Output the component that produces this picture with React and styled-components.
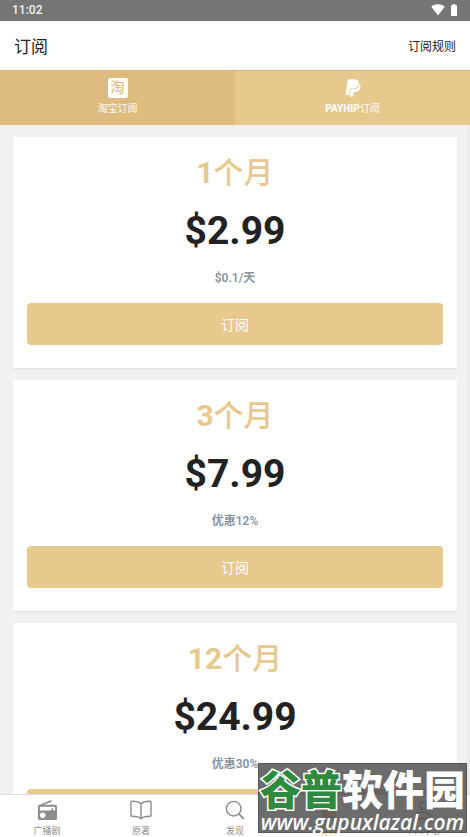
import React from 'react';
import styled, { createGlobalStyle } from 'styled-components';
import { FaPaypal } from 'react-icons/fa';
import { MdRadio } from 'react-icons/md';

const plans = [
  { id: 'month', count: '1', price: '$2.99', note: '$0.1/天' },
  { id: 'quarter', count: '3', price: '$7.99', note: '优惠12%' },
  { id: 'year', count: '12', price: '$24.99', note: '优惠30%' },
];

const BookIcon = () => (
  <svg width="22" height="20" viewBox="0 0 22 20" fill="none" stroke="currentColor">
    <path
      d="M11 3.800C9 1.800 5.400 1.100 2 1.300Q1 1.400 1 2.300V15.400Q1 16.300 2 16.300C5.400 16.300 9 16.500 11 18.700C13 16.500 16.600 16.300 20 16.300Q21 16.300 21 15.400V2.300Q21 1.400 20 1.300C16.600 1.100 13 1.800 11 3.800ZM11 3.800V18.500"
      strokeWidth="1.4"
      strokeLinejoin="round"
    />
  </svg>
);

const SearchIcon = () => (
  <svg width="20" height="20" viewBox="0 0 20 20" fill="none" stroke="currentColor">
    <circle cx="8.7" cy="8.7" r="7.300" strokeWidth="1.4" />
    <path d="M13.8 13.8L19 18.8" strokeWidth="1.7" />
  </svg>
);

const CardIcon = () => (
  <svg width="20" height="20" viewBox="0 0 20 20" fill="currentColor">
    <path d="M3 1h14v5H3zM3 8h14v10H3z" />
  </svg>
);

const UserIcon = () => (
  <svg width="20" height="20" viewBox="0 0 20 20" fill="none" stroke="currentColor">
    <circle cx="10" cy="5.5" r="3.8" strokeWidth="1.4" />
    <path d="M2.500 18.500c0-4.500 3-6.500 7.500-6.500s7.500 2 7.500 6.500z" strokeWidth="1.4" />
  </svg>
);

const tabs = [
  { label: '广播剧', icon: <MdRadio size={23} /> },
  { label: '原著', icon: <BookIcon /> },
  { label: '发现', icon: <SearchIcon /> },
  { label: '订阅', icon: <CardIcon />, active: true },
  { label: '个人中心', icon: <UserIcon /> },
];

const Plan = ({ plan }) => (
  <PlanCard>
    <PlanTitle>
      <b>{plan.count}</b>个月
    </PlanTitle>
    <PlanPrice>{plan.price}</PlanPrice>
    <PlanNote>{plan.note}</PlanNote>
    <SubscribeButton type="button">订阅</SubscribeButton>
  </PlanCard>
);

export default () => (
  <Screen>
    <GlobalStyle />
    <StatusBar>
      <span>11:02</span>
      <StatusIcons>
        <svg width="14" height="12" viewBox="0 0 14 12" fill="#fff">
          <path d="M7 11.500L.3 2.700C4-.5 10-.5 13.700 2.700z" />
        </svg>
        <svg width="6" height="12" viewBox="0 0 6 12" fill="#fff">
          <path d="M1.800 0h2.400v1.200H6V12H0V1.200h1.800z" />
        </svg>
      </StatusIcons>
    </StatusBar>
    <Header>
      <PageTitle>订阅</PageTitle>
      <RulesLink href="#rules">订阅规则</RulesLink>
    </Header>
    <Methods>
      <MethodButton type="button" $selected>
        <TaobaoBadge>淘</TaobaoBadge>
        淘宝订阅
      </MethodButton>
      <MethodButton type="button">
        <FaPaypal size={20} />
        <span>
          <b>PAYHIP</b>订阅
        </span>
      </MethodButton>
    </Methods>
    <Plans>
      {plans.map((plan) => (
        <Plan key={plan.id} plan={plan} />
      ))}
    </Plans>
    <TabBar>
      {tabs.map((tab) => (
        <TabLink key={tab.label} href="#tab" $active={tab.active}>
          <TabIcon>{tab.icon}</TabIcon>
          {tab.label}
        </TabLink>
      ))}
    </TabBar>
    <Watermark>
      <WatermarkName>
        <em>谷普</em>软件园
      </WatermarkName>
      <WatermarkSite>www.gupuxlazal.com</WatermarkSite>
    </Watermark>
  </Screen>
);

const GlobalStyle = createGlobalStyle`
  * {
    box-sizing: border-box;
  }

  body {
    margin: 0;
    font-family: Roboto, 'Noto Sans CJK SC', sans-serif;
    color: #222;
  }

  button {
    border: 0;
    font-family: inherit;
    cursor: pointer;
  }

  a {
    color: inherit;
    text-decoration: none;
  }
`;

const Screen = styled.div`
  position: relative;
  display: flex;
  flex-direction: column;
  height: 100vh;
  overflow: hidden;
  background: #f1f1f1;
`;

const StatusBar = styled.div`
  display: flex;
  flex: none;
  align-items: center;
  justify-content: space-between;
  height: 21px;
  padding: 0 13px 1px 12px;
  background: #757575;
  color: #f2f2f2;
  font-size: 12px;
  font-weight: 500;
`;

const StatusIcons = styled.div`
  display: flex;
  align-items: center;
  gap: 6px;
`;

const Header = styled.header`
  display: flex;
  flex: none;
  align-items: center;
  justify-content: space-between;
  height: 49px;
  padding: 0 14px;
  background: #fff;
`;

const PageTitle = styled.h1`
  margin: 0;
  font-size: 17px;
  font-weight: 400;
`;

const RulesLink = styled.a`
  font-size: 12px;
`;

const Methods = styled.div`
  display: flex;
  flex: none;
  height: 55px;
  border-top: 1px solid #d3b67f;
  background: #e7c88d;
`;

const MethodButton = styled.button`
  display: flex;
  flex: 1;
  flex-direction: column;
  align-items: center;
  gap: 3px;
  padding: 7px 0 0;
  background: ${(props) => (props.$selected ? '#debc80' : 'transparent')};
  color: #fff;
  font-size: 10px;
  line-height: 16px;

  svg {
    flex: none;
  }
`;

const TaobaoBadge = styled.span`
  width: 20px;
  height: 20px;
  border-radius: 2px;
  background: #fff;
  color: #d9b470;
  font-size: 14px;
  line-height: 19px;
  text-align: center;
`;

const Plans = styled.main`
  display: flex;
  flex: 1;
  flex-direction: column;
  gap: 12px;
  min-height: 0;
  padding: 12px 9px 12px 13px;
  overflow: hidden;
  border-right: 4px solid #ececec;
`;

const PlanCard = styled.section`
  display: flex;
  flex: none;
  flex-direction: column;
  align-items: center;
  padding: 15px 14px 23px;
  background: #fff;
  box-shadow: 0 1px 1px rgba(0, 0, 0, 0.06);
`;

const PlanTitle = styled.h2`
  margin: 0 0 13px;
  color: #e7c88d;
  font-size: 30px;
  font-weight: 500;
  line-height: 42px;
`;

const PlanPrice = styled.strong`
  margin-bottom: 13px;
  font-size: 39px;
  font-weight: 700;
  line-height: 48px;
`;

const PlanNote = styled.span`
  margin-bottom: 15px;
  color: #8795a1;
  font-size: 12px;
  font-weight: 600;
  line-height: 20px;
`;

const SubscribeButton = styled.button`
  width: 100%;
  height: 42px;
  border-radius: 4px;
  background: #e7c88d;
  color: #fff;
  font-size: 14px;
`;

const TabBar = styled.nav`
  display: flex;
  flex: none;
  height: 43px;
  border-top: 1px solid #ddd;
  background: #fff;
`;

const TabLink = styled.a`
  display: flex;
  flex: 1;
  flex-direction: column;
  align-items: center;
  gap: 4px;
  padding-top: 4px;
  color: ${(props) => (props.$active ? '#e7b866' : '#8c8c8c')};
  font-size: 9px;
  line-height: 12px;
`;

const TabIcon = styled.span`
  display: flex;
  align-items: center;
  justify-content: center;
  height: 22px;
`;

const Watermark = styled.div`
  position: absolute;
  right: 3px;
  bottom: 4px;
  display: flex;
  flex-direction: column;
  align-items: center;
  height: 70px;
  border: 1px solid rgba(60, 60, 60, 0.4);
  background: rgba(80, 80, 80, 0.84);
  color: #fff;
  white-space: nowrap;
`;

const WatermarkName = styled.span`
  padding: 0 1px;
  font-size: 41px;
  font-weight: 900;
  line-height: 54px;

  em {
    color: #2e8b3d;
    font-style: normal;
    -webkit-text-stroke: 3px #fff;
    paint-order: stroke fill;
  }
`;

const WatermarkSite = styled.span`
  font-family: 'Open Sans', sans-serif;
  font-size: 21px;
  font-style: italic;
  font-weight: 600;
  line-height: 8px;
`;
